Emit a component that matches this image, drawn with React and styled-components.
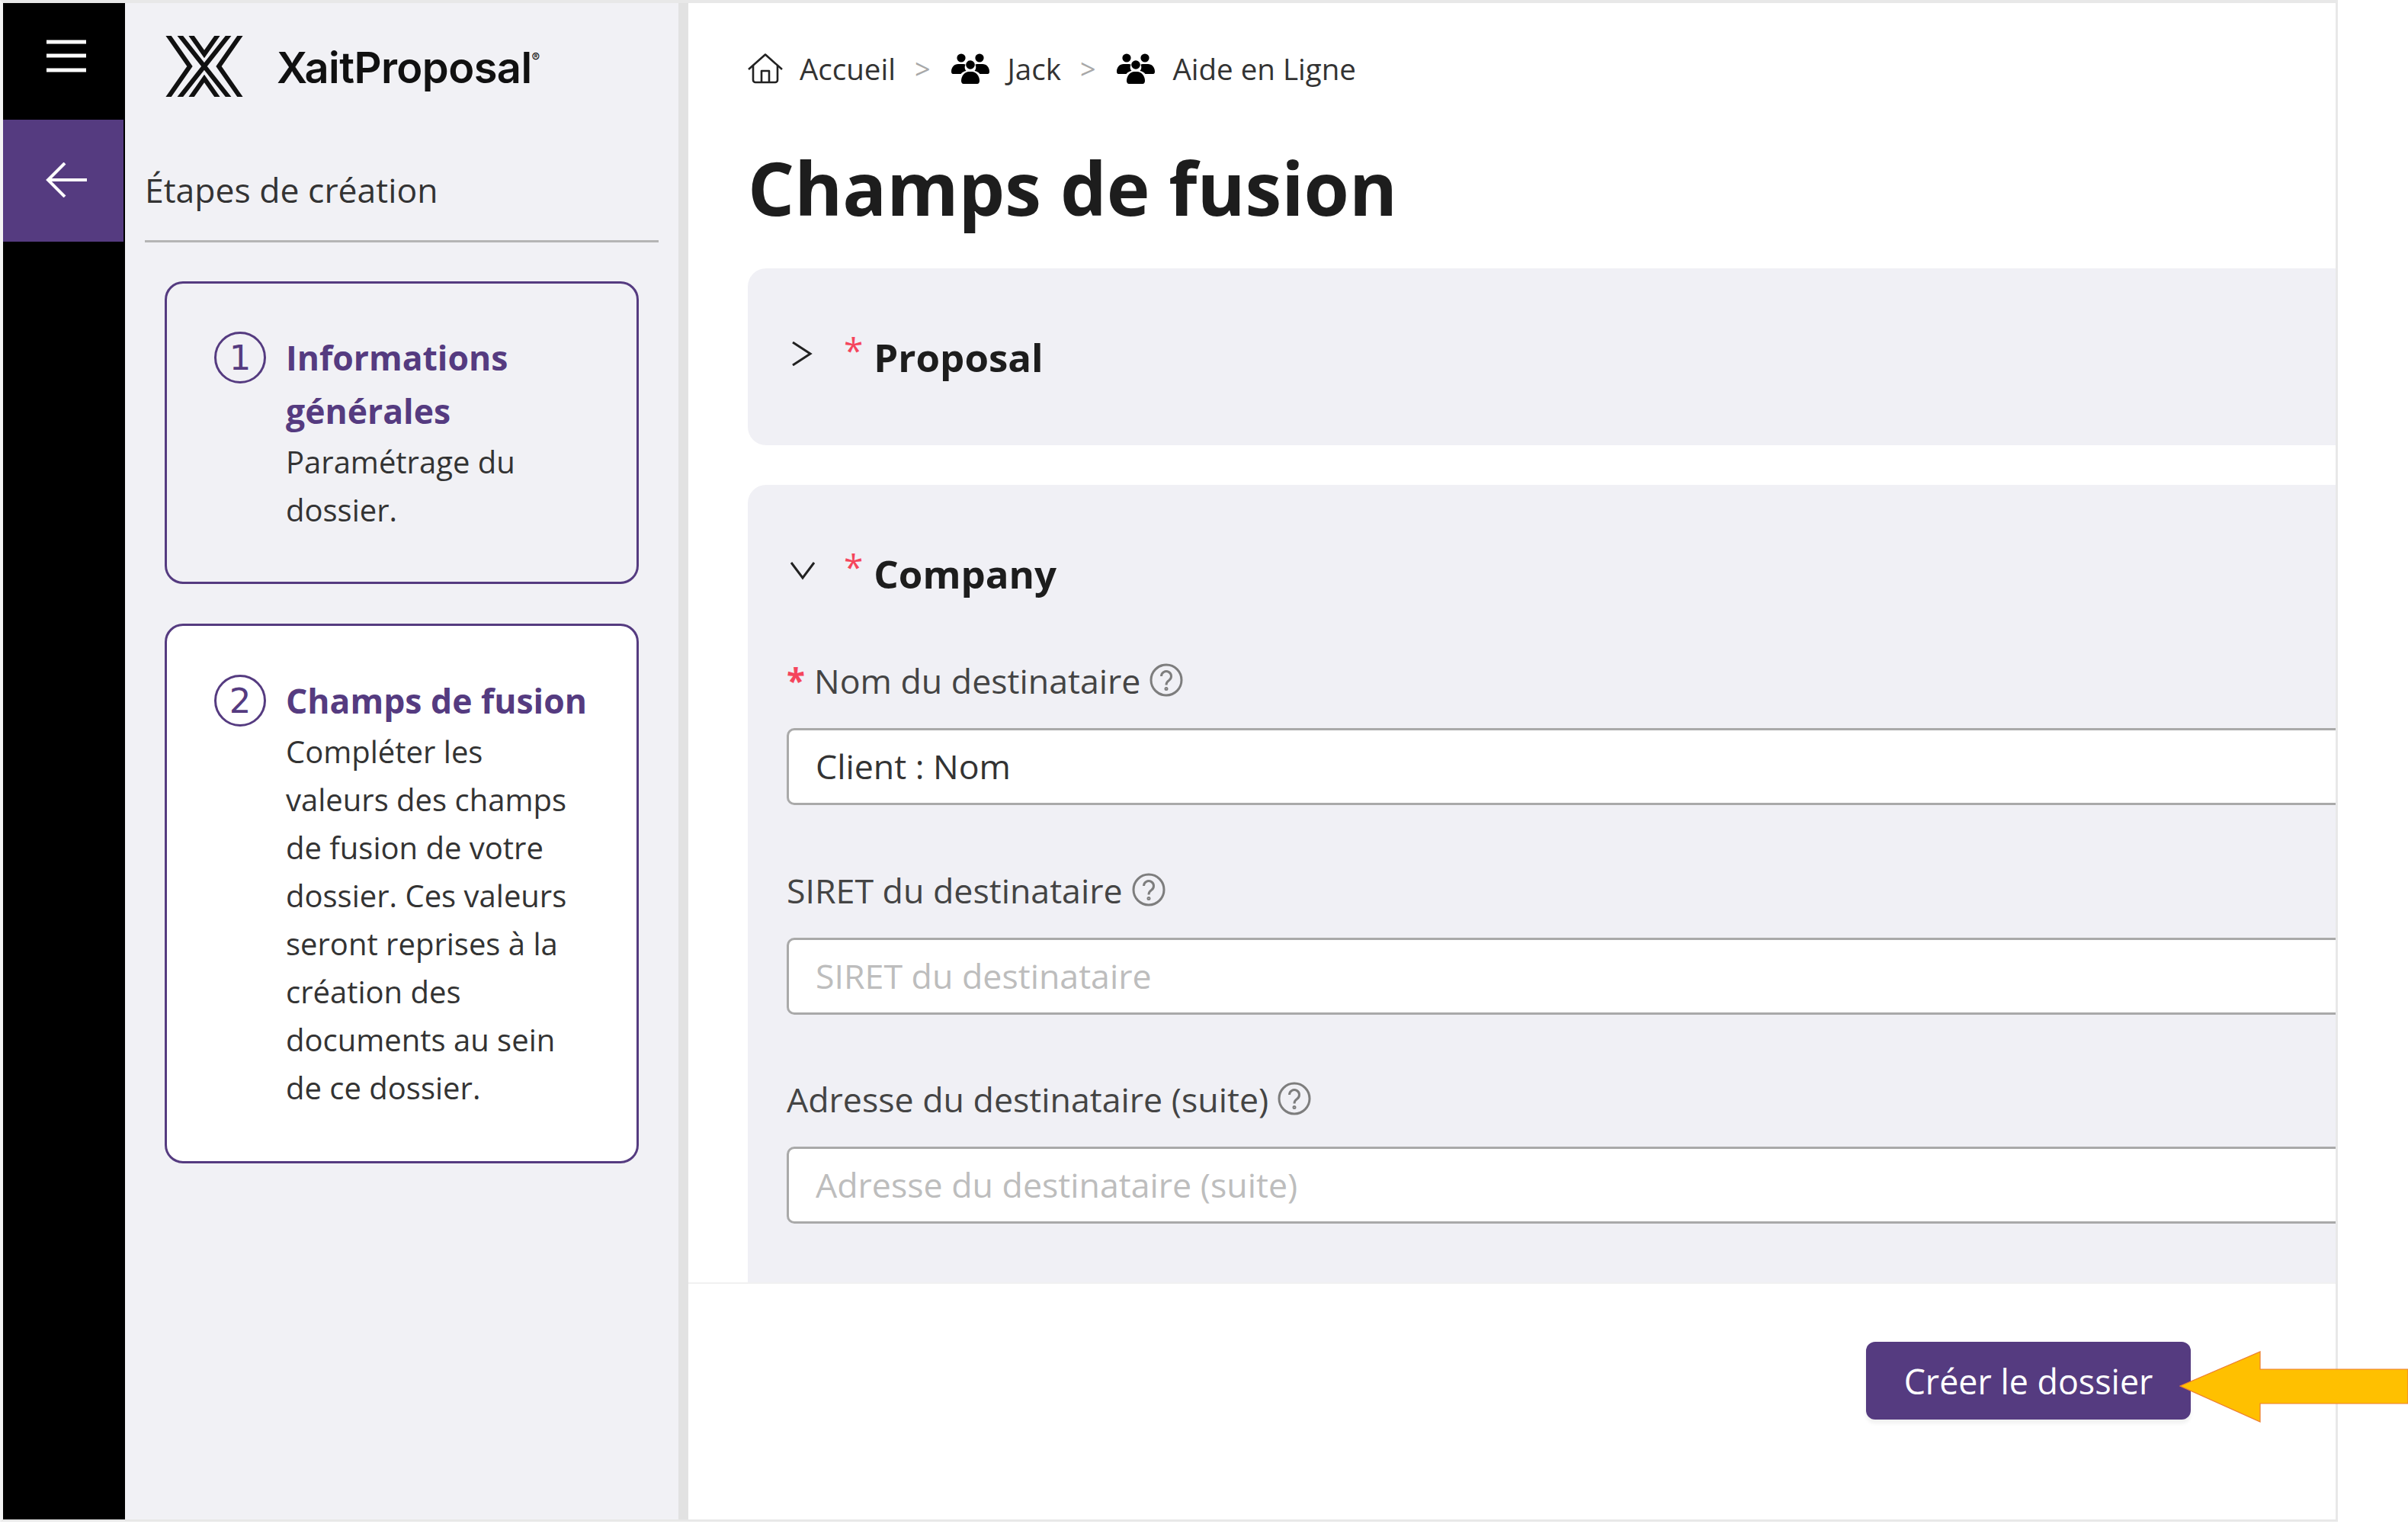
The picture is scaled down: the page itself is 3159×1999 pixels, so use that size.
import React from 'react';
import styled, { createGlobalStyle } from 'styled-components';

const purple = '#553b80';

const Global = createGlobalStyle`
  html, body { margin: 0; padding: 0; background: #fff; }
  * { box-sizing: border-box; }
  body { font-family: "Open Sans", "Liberation Sans", sans-serif; color: #262626; }
`;

const Screen = styled.div`
  position: relative;
  width: 3159px;
  height: 1999px;
  overflow: hidden;
  background: #fff;
`;

const Frame = styled.div`
  width: 3067px;
  height: 1996px;
  display: flex;
  border-top: 4px solid #e8e8e8;
  border-right: 3px solid #e8e8e8;
  border-bottom: 3px solid #e8e8e8;
  border-left: 4px solid #f4f4f4;
`;

const Rail = styled.nav`
  width: 160px;
  flex: none;
  background: #000;
`;

const MenuButton = styled.div`
  height: 153px;
  display: flex;
  justify-content: center;
  padding: 46px 0 0 5px;
`;

const BackButton = styled.div`
  height: 160px;
  width: 158px;
  display: flex;
  align-items: center;
  justify-content: center;
  padding: 0 0 3px 7px;
  background: ${purple};
`;

const Sidebar = styled.aside`
  width: 739px;
  flex: none;
  background: #f1f1f5;
  border-right: 13px solid #e2e2e2;
  padding: 43px 26px 0 26px;
`;

const Brand = styled.div`
  display: flex;
  align-items: center;
  gap: 44px;
  padding-left: 27px;
  height: 80px;
`;

const BrandName = styled.span`
  font-family: Inter, "Liberation Sans", sans-serif;
  font-weight: 600;
  font-size: 56px;
  letter-spacing: -0.6px;
  color: #111;
  margin-top: 3px;
  sup {
    font-size: 16px;
    font-weight: 500;
    letter-spacing: 0;
    vertical-align: 28px;
    line-height: 0;
  }
`;

const SideTitle = styled.h2`
  margin: 0;
  padding-top: 90px;
  height: 191px;
  font-size: 44.5px;
  font-weight: 400;
  line-height: 63px;
  border-bottom: 3px solid #b5b5b5;
  color: #333;
`;

const Steps = styled.div`
  display: flex;
  flex-direction: column;
  gap: 52px;
  padding: 51px 26px 0;
`;

const StepCard = styled.section`
  display: flex;
  gap: 26px;
  height: ${p => p.$height}px;
  padding: ${p => p.$top}px 0 0 62px;
  border: 3px solid ${purple};
  border-radius: 24px;
  background: ${p => p.$current ? '#fff' : 'transparent'};
`;

const StepNumber = styled.div`
  width: 68px;
  height: 68px;
  flex: none;
  margin-top: 1px;
  border: 3.5px solid ${purple};
  border-radius: 50%;
  display: flex;
  align-items: center;
  justify-content: center;
  color: ${purple};
  font-family: "DejaVu Sans", sans-serif;
  font-size: 45px;
  line-height: 1;
`;

const StepBody = styled.div`
  width: 398px;
`;

const StepTitle = styled.div`
  color: ${purple};
  font-size: 44.5px;
  font-weight: 700;
  line-height: 70px;
`;

const StepText = styled.div`
  font-size: 40px;
  line-height: 63px;
  color: #333;
`;

const Main = styled.main`
  flex: 1;
  min-width: 0;
  display: flex;
  flex-direction: column;
`;

const Scroll = styled.div`
  height: 1678px;
  flex: none;
  padding-left: 78px;
  overflow: hidden;
`;

const Crumbs = styled.div`
  display: flex;
  align-items: center;
  height: 60px;
  margin-top: 56px;
  font-size: 38.5px;
  color: #333;
`;

const CrumbIcon = styled.span`
  display: flex;
  margin-right: ${p => p.$gap}px;
  color: #000;
`;

const CrumbSep = styled.span`
  margin: 0 27px 0 25px;
  color: #a8a8a8;
  font-size: 36px;
`;

const Title = styled.h1`
  margin: 63px 0 0;
  height: 169px;
  font-size: 96px;
  font-weight: 700;
  line-height: 125px;
  color: #1d1d1d;
`;

const Panel = styled.section`
  background: #f0f0f5;
  border-radius: 24px 0 0 24px;
  padding: 0 0 0 51px;
  height: ${p => p.$height}px;
  margin-bottom: 52px;
`;

const PanelHead = styled.div`
  display: flex;
  align-items: center;
  height: 232px;
`;

const Chevron = styled.svg`
  width: 32px;
  height: 32px;
  flex: none;
  margin: -8px 38px 0 5px;
  fill: none;
  stroke: #222;
  stroke-width: 3;
`;

const Star = styled.span`
  color: #f5455c;
  font-size: 46px;
  margin-right: 14px;
  line-height: 1;
  align-self: flex-start;
  margin-top: 84px;
`;

const PanelTitle = styled.h3`
  margin: 0;
  font-size: 51px;
  font-weight: 700;
  line-height: 1;
  color: #1d1d1d;
`;

const Fields = styled.div`
  margin-top: -6px;
`;

const Field = styled.div`
  height: ${p => p.$height}px;
`;

const Label = styled.label`
  display: flex;
  align-items: center;
  height: 60px;
  font-size: 44.7px;
  color: #444;
`;

const Required = styled.span`
  color: #f5455c;
  font-weight: 700;
  margin-right: 12px;
  font-size: 44px;
  line-height: 1;
`;

const Help = styled.svg`
  width: 46px;
  height: 46px;
  margin-left: 11px;
  fill: none;
  stroke: #7d7d7d;
  stroke-width: 3;
`;

const Input = styled.input`
  display: block;
  width: 100%;
  height: 101px;
  margin-top: 33px;
  padding: 0 35px 3px;
  border: 3px solid #a9a9a9;
  border-right: none;
  border-radius: 10px 0 0 10px;
  background: #fff;
  font-family: inherit;
  font-size: 44.7px;
  color: #333;
  &::placeholder { color: #bdbdbd; opacity: 1; }
`;

const Footer = styled.footer`
  flex: 1;
  display: flex;
  justify-content: flex-end;
  align-items: flex-start;
  padding: 76px 190px 0 0;
  border-top: 2px solid #f1f1f1;
`;

const CreateButton = styled.button`
  width: 426px;
  height: 102px;
  border: none;
  border-radius: 12px;
  background: ${purple};
  color: #fff;
  font-family: inherit;
  font-size: 44.8px;
  box-shadow: 0 5px 5px rgba(0, 0, 0, 0.06);
`;

const Pointer = styled.svg`
  position: absolute;
  left: 2859px;
  top: 1772px;
  width: 300px;
  height: 94px;
`;

function Logo() {
  return (
    <svg width="102" height="80" viewBox="0 0 102 80" fill="none" stroke="#111" strokeWidth="6">
      {/* middle stripes cross, outer ones fold back, inner ones meet */}
      <path d="M17 -3L85 83M85 -3L17 83" />
      <path d="M2 -3L32 40L2 83M100 -3L70 40L100 83" />
      <path d="M32 -3L51 24L70 -3M32 83L51 56L70 83" />
    </svg>
  );
}

function Home() {
  return (
    <svg width="46" height="40" viewBox="0 0 46 40" fill="none" stroke="#222" strokeWidth="2.6" strokeLinejoin="round">
      <path d="M1 21L23 1.5L45 21" />
      <path d="M7 16V35a3 3 0 0 0 3 3H36a3 3 0 0 0 3-3V16" />
      <path d="M18 38V23H28V38" />
    </svg>
  );
}

function People() {
  return (
    <svg width="50" height="40" viewBox="0 0 50 40" fill="#000">
      <circle cx="13" cy="6" r="5.6" />
      <circle cx="37" cy="6" r="5.6" />
      <circle cx="25" cy="15" r="5.8" />
      <path d="M0 24c0-6 4-10 9-10h7c1 0 2 .3 2.6 .8c-1.6 2.6-1 6.4 1 8.2c-3 .6-5.6 2-7 4H2c-1 0-2-1-2-3z" />
      <path d="M50 24c0-6-4-10-9-10h-7c-1 0-2 .3-2.6 .8c1.6 2.6 1 6.4-1 8.2c3 .6 5.6 2 7 4h10.6c1 0 2-1 2-3z" />
      <path d="M13 36c0-7 5-12 10-12h4c5 0 10 5 10 12c0 2-1 4-3 4H16c-2 0-3-2-3-4z" />
    </svg>
  );
}

function HelpIcon() {
  return (
    <Help viewBox="0 0 46 46">
      <circle cx="23" cy="23" r="20" />
      <path d="M16.5 18a6.5 6.5 0 1 1 10 5.5c-2.5 1.6-3.5 3-3.5 6" />
      <circle cx="23" cy="34.5" r="1" />
    </Help>
  );
}

export default function App() {
  return (
    <Screen>
      <Global />
      <Frame>
        <Rail>
          <MenuButton>
            <svg width="54" height="46" viewBox="0 0 54 46" stroke="#fff" strokeWidth="5">
              <path d="M1 5H53M1 23H53M1 42H53" />
            </svg>
          </MenuButton>
          <BackButton>
            <svg width="54" height="46" viewBox="0 0 54 46" fill="none" stroke="#fff" strokeWidth="4">
              <path d="M54 23H3M25 1L3 23L25 45" />
            </svg>
          </BackButton>
        </Rail>

        <Sidebar>
          <Brand>
            <Logo />
            <BrandName>XaitProposal<sup>®</sup></BrandName>
          </Brand>
          <SideTitle>Étapes de création</SideTitle>
          <Steps>
            <StepCard $height={397} $top={62}>
              <StepNumber>1</StepNumber>
              <StepBody>
                <StepTitle>Informations générales</StepTitle>
                <StepText>Paramétrage du dossier.</StepText>
              </StepBody>
            </StepCard>
            <StepCard $current $height={708} $top={63}>
              <StepNumber>2</StepNumber>
              <StepBody>
                <StepTitle>Champs de fusion</StepTitle>
                <StepText>Compléter les valeurs des champs de fusion de votre dossier. Ces valeurs seront reprises à la création des documents au sein de ce dossier.</StepText>
              </StepBody>
            </StepCard>
          </Steps>
        </Sidebar>

        <Main>
          <Scroll>
            <Crumbs>
              <CrumbIcon $gap={22}><Home /></CrumbIcon>
              Accueil
              <CrumbSep>&gt;</CrumbSep>
              <CrumbIcon $gap={24}><People /></CrumbIcon>
              Jack
              <CrumbSep>&gt;</CrumbSep>
              <CrumbIcon $gap={24}><People /></CrumbIcon>
              Aide en Ligne
            </Crumbs>
            <Title>Champs de fusion</Title>

            <Panel $height={232}>
              <PanelHead>
                <Chevron viewBox="0 0 32 32"><path d="M3 1L26 16L3 31" /></Chevron>
                <Star>*</Star>
                <PanelTitle>Proposal</PanelTitle>
              </PanelHead>
            </Panel>

            <Panel $height={1100}>
              <PanelHead>
                <Chevron viewBox="0 0 32 32"><path d="M1 6L16 26L31 6" /></Chevron>
                <Star>*</Star>
                <PanelTitle>Company</PanelTitle>
              </PanelHead>
              <Fields>
                <Field $height={275}>
                  <Label><Required>*</Required>Nom du destinataire<HelpIcon /></Label>
                  <Input readOnly value="Client : Nom" />
                </Field>
                <Field $height={274}>
                  <Label>SIRET du destinataire<HelpIcon /></Label>
                  <Input readOnly placeholder="SIRET du destinataire" />
                </Field>
                <Field $height={274}>
                  <Label>Adresse du destinataire (suite)<HelpIcon /></Label>
                  <Input readOnly placeholder="Adresse du destinataire (suite)" />
                </Field>
              </Fields>
            </Panel>
          </Scroll>
          <Footer>
            <CreateButton>Créer le dossier</CreateButton>
          </Footer>
        </Main>
      </Frame>
      <Pointer viewBox="0 0 300 94">
        <path d="M1 46L106 1V24H300V69H106V93Z" fill="#ffc000" stroke="#ed7d31" strokeWidth="1.2" />
      </Pointer>
    </Screen>
  );
}
